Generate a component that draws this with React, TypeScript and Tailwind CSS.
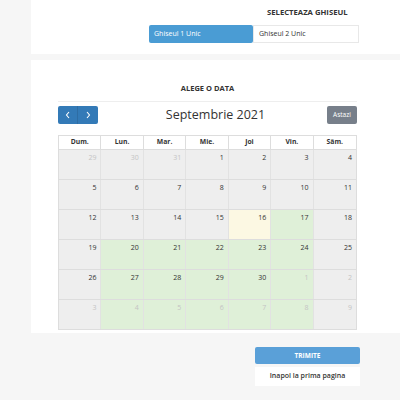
import React from "react";

type Cell = { d: number; other?: boolean; kind: "gray" | "green" | "today" };

const rows: Cell[][] = [
  [29, 30, 31].map((d) => ({ d, other: true, kind: "gray" as const })).concat(
    [1, 2, 3, 4].map((d) => ({ d, kind: "gray" as const }))
  ),
  [5, 6, 7, 8, 9, 10, 11].map((d) => ({ d, kind: "gray" as const })),
  [
    { d: 12, kind: "gray" },
    { d: 13, kind: "gray" },
    { d: 14, kind: "gray" },
    { d: 15, kind: "gray" },
    { d: 16, kind: "today" },
    { d: 17, kind: "green" },
    { d: 18, kind: "gray" },
  ],
  [
    { d: 19, kind: "gray" },
    { d: 20, kind: "green" },
    { d: 21, kind: "green" },
    { d: 22, kind: "green" },
    { d: 23, kind: "green" },
    { d: 24, kind: "green" },
    { d: 25, kind: "gray" },
  ],
  [
    { d: 26, kind: "gray" },
    { d: 27, kind: "green" },
    { d: 28, kind: "green" },
    { d: 29, kind: "green" },
    { d: 30, kind: "green" },
    { d: 1, other: true, kind: "green" },
    { d: 2, other: true, kind: "gray" },
  ],
  [
    { d: 3, other: true, kind: "gray" },
    { d: 4, other: true, kind: "green" },
    { d: 5, other: true, kind: "green" },
    { d: 6, other: true, kind: "green" },
    { d: 7, other: true, kind: "green" },
    { d: 8, other: true, kind: "green" },
    { d: 9, other: true, kind: "gray" },
  ],
];

const days = ["Dum.", "Lun.", "Mar.", "Mie.", "Joi", "Vin.", "Sâm."];

export default function App() {
  return (
    <div
      className="w-[400px] h-[400px] bg-[#f6f6f6] pl-[31px] flex flex-col overflow-hidden"
      style={{ fontFamily: '"Open Sans", "Noto Sans", sans-serif' }}
    >
      <div className="h-[54px] bg-white flex flex-col shrink-0">
        <div className="h-[25px] flex items-center pl-[236px]">
          <span className="text-[7.7px] font-bold text-[#333]">SELECTEAZA GHISEUL</span>
        </div>
        <div className="pl-[118px] flex">
          <div className="w-[104px] h-[18px] bg-[#4a9cd4] rounded-[2px] flex items-center pl-[5px] text-[7px] text-white">
            Ghiseul 1 Unic
          </div>
          <div className="w-[106px] h-[18px] bg-white border border-[#e8e8e8] flex items-center pl-[5px] text-[7px] text-[#333]">
            Ghiseul 2 Unic
          </div>
        </div>
      </div>

      <div className="mt-[6px] h-[273px] bg-white shrink-0 pl-[27px]">
        <div className="w-[299px]">
          <div className="h-[41px] flex items-end justify-center pb-[7px]">
            <span className="text-[7.5px] font-bold text-[#333]">ALEGE O DATA</span>
          </div>
          <div className="border-t border-[#eeeeee]" />
          <div className="mt-[4px] h-[18px] flex items-center justify-between">
            <div className="flex h-[18px]">
              <div className="w-[20px] h-[18px] bg-[#337ab7] rounded-l-[2px] border-r border-[#2e6da4] flex items-center justify-center">
                <svg width="6" height="8" viewBox="0 0 6 8">
                  <path d="M4 1 L1.5 4 L4 7" stroke="white" strokeWidth="1.1" fill="none" />
                </svg>
              </div>
              <div className="w-[20px] h-[18px] bg-[#337ab7] rounded-r-[2px] flex items-center justify-center">
                <svg width="6" height="8" viewBox="0 0 6 8">
                  <path d="M2 1 L4.5 4 L2 7" stroke="white" strokeWidth="1.1" fill="none" />
                </svg>
              </div>
            </div>
            <span className="text-[12.5px] text-[#333] leading-none pl-[6px]">Septembrie 2021</span>
            <div className="w-[30px] h-[18px] bg-[#777f8a] rounded-[2px] flex items-center justify-center text-[6.5px] text-white">
              Astazi
            </div>
          </div>
          <div className="mt-[11px] border border-[#dddddd]">
            <div className="grid grid-cols-7 h-[13px] bg-white">
              {days.map((d, i) => (
                <div
                  key={d}
                  className={`flex items-center justify-center text-[6.8px] font-bold text-[#333] ${i < 6 ? "border-r border-[#dddddd]" : ""}`}
                >
                  {d}
                </div>
              ))}
            </div>
            {rows.map((r, ri) => (
              <div key={ri} className="grid grid-cols-7 h-[30px] border-t border-[#dddddd]">
                {r.map((c, ci) => (
                  <div
                    key={ci}
                    className={`flex justify-end pr-[4px] pt-[4px] text-[7px] leading-none ${
                      ci < 6 ? "border-r border-[#e2e2e2]" : ""
                    } ${
                      c.kind === "green" ? "bg-[#dff0d8]" : c.kind === "today" ? "bg-[#fcf8e3]" : "bg-[#eeeeee]"
                    } ${c.other ? "text-[#c4c4c4]" : "text-[#333]"}`}
                  >
                    {c.d}
                  </div>
                ))}
              </div>
            ))}
          </div>
        </div>
      </div>

      <div className="mt-[14px] ml-[224px] w-[105px] flex flex-col gap-[3px]">
        <div className="h-[17px] bg-[#5aa0d8] rounded-[2px] flex items-center justify-center text-[6.5px] font-bold text-white">
          TRIMITE
        </div>
        <div className="h-[19px] bg-white flex items-center justify-center text-[7px] font-semibold text-[#333]">
          Inapoi la prima pagina
        </div>
      </div>
    </div>
  );
}
